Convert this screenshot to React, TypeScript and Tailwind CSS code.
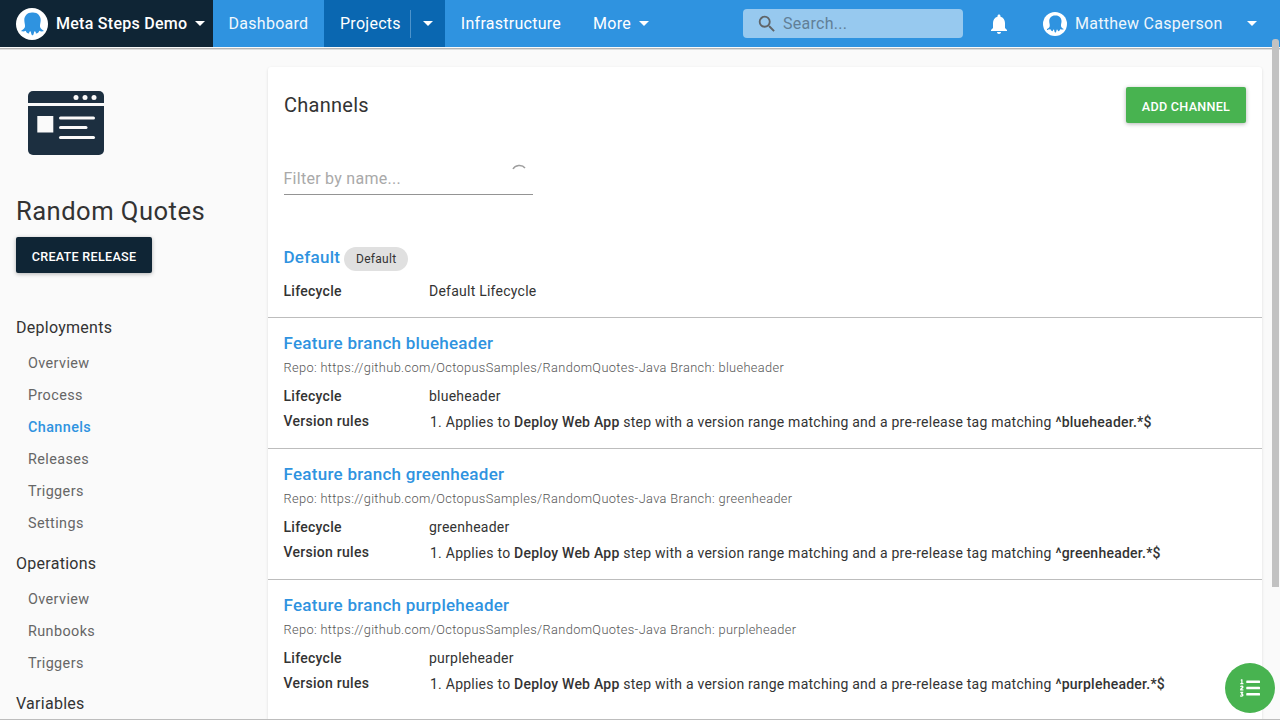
import React from "react";
import { FaListOl } from "react-icons/fa";

const Caret = ({ className = "" }: { className?: string }) => (
  <svg width="10" height="5" viewBox="0 0 10 5" className={className}>
    <path d="M0 0h10L5 5z" fill="#fff" />
  </svg>
);

const Octo = ({ size, color, bg = "#fff" }: { size: number; color: string; bg?: string }) => (
  <svg width={size} height={size} viewBox="0 0 32 32" className="shrink-0">
    <circle cx="16" cy="16" r="16" fill={bg} />
    <path
      d="M16 4.500c-4.800 0-7.700 3.500-7.700 7.600 0 2.700.9 4.500.7 6.400-.2 1.700-1.700 3-3.700 4.300-.5.400 2.500 1.300 4.400-.1.300 1.500 2 3 3.500 2.800-.3-1.300.4-2.300 1.100-2.300.9 0 .6 2.500 1.500 3.700.4.500 1 .5 1.400 0 .9-1.200.6-3.700 1.500-3.700.7 0 1.400 1 1.100 2.300 1.500.2 3.200-1.300 3.500-2.800 1.900 1.400 4.900.5 4.400.1-2-1.300-3.500-2.600-3.700-4.300-.2-1.900.7-3.700.7-6.400 0-4.100-2.900-7.600-7.700-7.600z"
      fill={color}
    />
  </svg>
);

const SideHead = ({ children, className = "" }: { children: React.ReactNode; className?: string }) => (
  <div className={`h-[24px] leading-[24px] text-[16px] text-[#333] pl-[16px] ${className}`}>{children}</div>
);

const SideItem = ({ children, active = false }: { children: React.ReactNode; active?: boolean }) => (
  <div
    className={`h-[32px] leading-[32px] text-[14.400px] tracking-[0.4px] pl-[28px] ${
      active ? "text-[#2f93e0] font-medium" : "text-[#666]"
    }`}
  >
    {children}
  </div>
);

const Channel = ({ name, branch }: { name: string; branch: string }) => (
  <div className="border-t border-[#bdbdbd] h-[131px] pl-[15.500px] pt-[14px]">
    <div className="h-[22px] leading-[22px] text-[17px] font-medium text-[#2f93e0]">{name}</div>
    <div className="mt-[5px] h-[18px] leading-[18px] text-[12.800px] tracking-[0.36px] font-light text-[#555]">
      Repo: https://github.com/OctopusSamples/RandomQuotes-Java Branch: {branch}
    </div>
    <div className="mt-[7px] flex h-[24px] leading-[24px] text-[14px] tracking-[0.24px] text-[#333]">
      <div className="w-[145.500px] font-medium tracking-[0.27px]">Lifecycle</div>
      <div>{branch}</div>
    </div>
    <div className="mt-[2px] flex h-[24px] text-[14px] tracking-[0.24px] text-[#333]">
      <div className="w-[145.500px] font-medium leading-[22px] tracking-[0.27px]">Version rules</div>
      <div className="pl-[1px] leading-[24px]">
        1. Applies to <span className="font-medium">Deploy Web App</span> step with a version range matching and a
        pre-release tag matching <span className="font-medium">^{branch}.*$</span>
      </div>
    </div>
  </div>
);

export default function App() {
  return (
    <div className="relative h-[720px] w-[1280px] overflow-hidden bg-[#fafafa] font-['Roboto',sans-serif] tracking-[0.27px] flex flex-col">
      {/* top bar */}
      <header className="h-[47px] shrink-0 flex bg-[#2f93e0] text-white text-[16px]">
        <div className="w-[213px] bg-[#0f2535] flex items-center pl-[16px]">
          <Octo size={32} color="#2f93e0" />
          <span className="ml-[8px] font-medium text-[16px]">Meta Steps Demo</span>
          <Caret className="ml-[8px]" />
        </div>
        <div className="w-[111px] flex items-center justify-center text-[#f2f8fd]">Dashboard</div>
        <div className="w-[121px] flex items-center bg-[#0a67b1] pl-[16px]">
          <span>Projects</span>
          <div className="ml-[9px] w-px h-[28px] bg-[#4d93cb]" />
          <Caret className="ml-[12px]" />
        </div>
        <div className="w-[132px] flex items-center justify-center">Infrastructure</div>
        <div className="w-[166px] flex items-center pl-[16px]">
          <span>More</span>
          <Caret className="ml-[8px]" />
        </div>
        <div className="mt-[9px] h-[29px] w-[220px] rounded-[4px] bg-[#97c9ef] flex items-center pl-[13px]">
          <svg width="22" height="22" viewBox="0 0 24 24" className="shrink-0">
            <path
              d="M15.500 14h-.790l-.280-.270A6.470 6.470 0 0 0 16 9.500 6.500 6.500 0 1 0 9.500 16c1.610 0 3.090-.590 4.230-1.570l.270.280v.790l5 4.990L20.490 19l-4.990-5zm-6 0C7.010 14 5 11.990 5 9.500S7.010 5 9.500 5 14 7.010 14 9.500 11.990 14 9.500 14z"
              fill="#5f6468"
            />
          </svg>
          <span className="ml-[5px] text-[16px] text-[#617f97]">Search...</span>
        </div>
        <div className="ml-[24px] flex items-center">
          <svg width="24" height="24" viewBox="0 0 24 24">
            <path
              d="M12 22c1.100 0 2-.900 2-2h-4c0 1.100.900 2 2 2zm6-6v-5c0-3.070-1.630-5.640-4.500-6.320V4c0-.830-.670-1.500-1.500-1.500s-1.500.670-1.500 1.500v.680C7.640 5.360 6 7.920 6 11v5l-2 2v1h16v-1l-2-2z"
              fill="#fff"
            />
          </svg>
        </div>
        <div className="ml-[32px] flex items-center">
          <Octo size={24} color="#2f93e0" />
          <span className="ml-[8px] text-[#eef6fc]">Matthew Casperson</span>
          <Caret className="ml-[24px]" />
        </div>
      </header>
      <div className="h-[1px] shrink-0 bg-[#fafafa]" />
      <div className="h-[1px] shrink-0 bg-[#b5b5b5]" />
      <div className="h-[1px] shrink-0 bg-[#dedede]" />

      <div className="flex flex-1 min-h-0">
        {/* sidebar */}
        <aside className="w-[268px] shrink-0">
          <svg width="78" height="66" viewBox="0 0 78 66" className="ml-[27px] mt-[40px] block">
            <rect x="1" y="1" width="76" height="64" rx="5" fill="#1c2f40" />
            <rect x="1" y="13" width="76" height="3" fill="#fafafa" />
            <circle cx="49" cy="7.500" r="2.500" fill="#fafafa" />
            <circle cx="58" cy="7.500" r="2.500" fill="#fafafa" />
            <circle cx="67" cy="7.500" r="2.500" fill="#fafafa" />
            <rect x="10.300" y="26" width="16" height="16.500" fill="#fafafa" />
            <rect x="32" y="26.500" width="36" height="3" rx="1.500" fill="#fafafa" />
            <rect x="32" y="36" width="28.500" height="3" rx="1.500" fill="#fafafa" />
            <rect x="32" y="46" width="36" height="3" rx="1.500" fill="#fafafa" />
          </svg>
          <div className="mt-[38px] ml-[16px] h-[34px] leading-[34px] text-[25.600px] tracking-[0.46px] text-[#333]">
            Random Quotes
          </div>
          <div className="ml-[16px] mt-[9px] w-[136px] h-[36px] pt-[5px] rounded-[2px] bg-[#0f2535] text-white text-[12.600px] font-medium flex items-center justify-center shadow-[0_1px_4px_rgba(0,0,0,0.3)]">
            CREATE RELEASE
          </div>
          <SideHead className="mt-[43px]">Deployments</SideHead>
          <div className="mt-[8px]">
            <SideItem>Overview</SideItem>
            <SideItem>Process</SideItem>
            <SideItem active>Channels</SideItem>
            <SideItem>Releases</SideItem>
            <SideItem>Triggers</SideItem>
            <SideItem>Settings</SideItem>
          </div>
          <SideHead className="mt-[12px]">Operations</SideHead>
          <div className="mt-[8px]">
            <SideItem>Overview</SideItem>
            <SideItem>Runbooks</SideItem>
            <SideItem>Triggers</SideItem>
          </div>
          <SideHead className="mt-[12px]">Variables</SideHead>
        </aside>

        {/* main card */}
        <main className="mt-[17px] w-[994px] h-[700px] shrink-0 bg-white rounded-t-[3px] shadow-[0_1px_3px_rgba(0,0,0,0.12)]">
          <div className="flex justify-between pl-[16px] pr-[16px] pt-[20px]">
            <div className="h-[36px] leading-[36px] text-[20px] text-[#333]">Channels</div>
            <div className="w-[120px] h-[36px] pt-[5px] rounded-[2px] bg-[#48b350] text-white text-[12.600px] font-medium flex items-center justify-center shadow-[0_1px_4px_rgba(0,0,0,0.3)]">
              ADD CHANNEL
            </div>
          </div>
          <div className="relative ml-[15.500px] mt-[34px] w-[249.500px] h-[38px] border-b border-[#949494] text-[16px] text-[#a9a9a9] leading-[38px] pt-[3px]">
            Filter by name...
            <svg width="14" height="6" viewBox="0 0 14 6" className="absolute right-[7px] top-[7px]">
              <path d="M1 5C3 1 10 0 13 4" fill="none" stroke="#9e9e9e" strokeWidth="1.500" />
            </svg>
          </div>

          <div className="h-[122px] pl-[15.500px] pt-[51px]">
            <div className="flex h-[24px] items-center">
              <span className="text-[17px] font-medium text-[#2f93e0]">Default</span>
              <span className="ml-[4px] mt-[2px] h-[24px] w-[64px] rounded-full bg-[#e0e0e0] text-[12px] leading-[24px] text-center text-[#333]">
                Default
              </span>
            </div>
            <div className="mt-[9px] flex h-[24px] leading-[24px] text-[14px] tracking-[0.24px] text-[#333]">
              <div className="w-[145.500px] font-medium tracking-[0.27px]">Lifecycle</div>
              <div>Default Lifecycle</div>
            </div>
          </div>
          <Channel name="Feature branch blueheader" branch="blueheader" />
          <Channel name="Feature branch greenheader" branch="greenheader" />
          <Channel name="Feature branch purpleheader" branch="purpleheader" />
        </main>
      </div>

      {/* overlays */}
      <div className="absolute right-[1px] top-[39px] h-[548px] w-[7px] rounded-t-[3px] bg-[#c2c2c2]" />
      <div className="absolute left-0 right-0 bottom-0 h-[1px] bg-[#bdbdbd]" />
      <div className="absolute left-[1225px] top-[663px] h-[50px] w-[50px] rounded-full bg-[#48b350] flex items-center justify-center text-white">
        <FaListOl size={20} />
      </div>
    </div>
  );
}
